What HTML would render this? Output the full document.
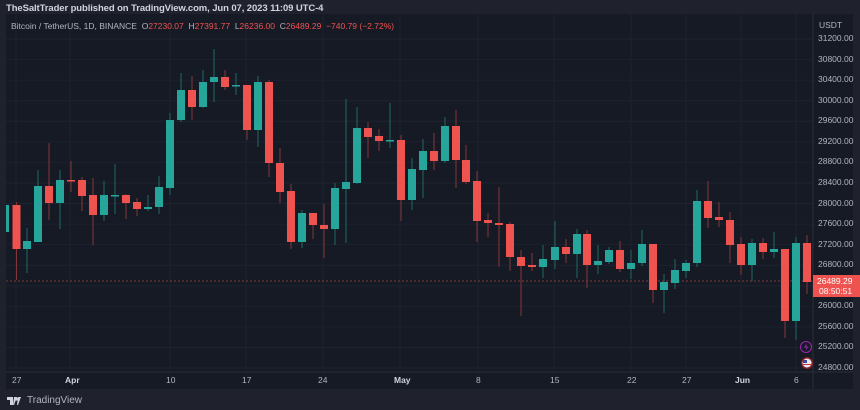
<!DOCTYPE html>
<html><head><meta charset="utf-8"><style>
*{margin:0;padding:0;box-sizing:border-box}
body{width:860px;height:410px;background:#1f222c;overflow:hidden;font-family:"Liberation Sans",sans-serif;position:relative}
.hdr{position:absolute;left:6px;top:3px;font-size:9.5px;color:#d1d4dc;font-weight:bold;letter-spacing:-0.1px}
.panel{position:absolute;left:6px;top:14px;width:847px;height:375px;background:#161a25}
.leg{position:absolute;left:11px;top:21px;font-size:8.5px;color:#b2b5be;white-space:nowrap}
.leg .r{color:#ef5350}
.ax{position:absolute;font-size:8.5px;color:#b2b5be}
.foot{position:absolute;left:7px;top:395px;font-size:10px;color:#b2b5be;display:flex;align-items:center;gap:4px}
</style></head><body>
<div class="hdr">TheSaltTrader published on TradingView.com, Jun 07, 2023 11:09 UTC-4</div>
<div class="panel"></div>
<svg id="s" width="860" height="410" style="position:absolute;left:0;top:0"></svg>
<div class="leg">Bitcoin / TetherUS, 1D, BINANCE &nbsp;O<span class="r">27230.07</span> &nbsp;H<span class="r">27391.77</span> &nbsp;L<span class="r">26236.00</span> &nbsp;C<span class="r">26489.29</span> &nbsp;<span class="r">−740.79 (−2.72%)</span></div>
<div class="ax" style="left:819px;top:20px">USDT</div>
<div id="pl"></div>
<div class="foot"><svg width="16" height="10" viewBox="0 0 16 10"><path d="M0 1h6v8H3V4H0z M7 1h3l-3 8H6z M11 1h3l-3 8h-1z" fill="#d1d4dc"/><circle cx="9.5" cy="3" r="1.6" fill="#d1d4dc"/></svg><span>TradingView</span></div>
<script>
const s=document.getElementById('s');let h='';
for(let i=0;i<=16;i++){const y=39+i*20.5625;h+=`<line x1="6" x2="813" y1="${y}" y2="${y}" stroke="#1e2230" stroke-width="1"/>`;}
const vx=[16,70,170,246,323,400,478,554,631,686,741,796];
vx.forEach(x=>h+=`<line x1="${x}" x2="${x}" y1="14" y2="372" stroke="#1e2230"/>`);
h+=`<line x1="813" x2="813" y1="14" y2="389" stroke="#2a2e39"/><line x1="6" x2="853" y1="372" y2="372" stroke="#2a2e39"/>`;
h+=`<line x1="6" x2="813" y1="281" y2="281" stroke="#ef5350" stroke-opacity="0.5" stroke-dasharray="2,2"/>`;
const C=[[8,'g',205,232,205,232],[16.5,'r',205,249,202,280],[27,'g',241,249,228,273],[38,'g',186,242,170,242],[49,'r',186,203,143,220],[60,'g',180,203,170,229],[71,'r',180,181,161,192],[82,'r',180,196,177,211],[93,'r',195,215,178,245],[104,'g',195,215,181,221],[115,'g',195,196,164,214],[126,'r',195,203,194,219],[137,'r',202,209,198,216],[148,'g',207,209,195,211],[159,'g',187,207,176,214],[170,'g',120,188,113,195],[181,'g',90,120,73,122],[192,'r',90,107,76,120],[203,'g',82,107,70,108],[214,'g',77,82,49,102],[225,'r',77,87,70,90],[236,'g',85,86,73,95],[247,'r',85,130,85,140],[258,'g',82,130,76,147],[269,'r',82,163,80,177],[280,'r',163,192,148,203],[291,'r',191,242,184,249],[302,'g',213,242,210,248],[313,'r',213,225,213,239],[324,'r',225,229,204,258],[335,'g',188,229,183,245],[346,'g',182,189,99,243],[357,'g',128,183,107,184],[368,'r',128,137,122,158],[379,'r',136,141,129,151],[390,'g',140,141,103,148],[401,'r',140,200,135,221],[412,'g',169,200,158,210],[423,'g',151,170,139,198],[434,'r',151,161,133,170],[445,'g',126,161,117,163],[456,'r',126,160,110,188],[466,'r',160,182,145,184],[477,'r',181,221,171,242],[488,'r',220,223,213,237],[499,'r',223,225,187,267],[510,'r',224,257,222,271],[521,'r',257,266,250,316],[532,'r',265,267,253,271],[543,'g',259,267,245,278],[555,'g',247,260,221,269],[566,'r',247,254,239,263],[577,'g',234,254,229,278],[587,'r',234,265,230,288],[598,'g',261,265,245,274],[609,'g',250,262,247,264],[620,'r',250,269,241,272],[631,'g',263,269,250,279],[642,'g',244,263,230,266],[653,'r',244,290,244,303],[664,'g',282,290,274,313],[675,'g',270,283,259,289],[686,'g',263,271,260,278],[697,'g',201,263,190,267],[708,'r',201,218,181,228],[719,'r',217,220,202,227],[730,'r',220,245,212,263],[741,'r',244,265,237,275],[752,'g',243,265,239,281],[763,'r',243,252,238,259],[774,'g',249,252,232,258],[785,'r',249,321,249,338],[796,'g',243,321,237,340],[807,'r',243,282,235,294]];
C.forEach(([x,c,bt,bb,wt,wb])=>{const col=c=='g'?'#26a69a':'#ef5350',wc=c=='g'?'#1f6a64':'#843538';
h+=`<line x1="${x}" x2="${x}" y1="${wt}" y2="${wb}" stroke="${wc}" stroke-width="1"/>`;
const l=x===8?6:x-4;const w=x===8?3:8;h+=`<rect x="${l}" y="${bt}" width="${w}" height="${Math.max(1.5,bb-bt)}" fill="${col}"/>`;});
h+=`<rect x="813" y="275" width="47" height="22" fill="#ef5350"/>`;
h+=`<circle cx="806" cy="347" r="5.5" fill="none" stroke="#9c27b0" stroke-width="1"/><path d="M807 343l-3 4.5h2.5l-1 3.5 3-4.5h-2.5z" fill="#9c27b0"/>`;
h+=`<circle cx="807" cy="363" r="6" fill="#8b1f2a"/><circle cx="807" cy="363" r="4.5" fill="#e8e8f0"/><rect x="803" y="360" width="4" height="3" fill="#3a4a9a"/><rect x="803" y="364" width="8" height="1" fill="#d03040"/>`;
s.innerHTML=h;
let p='';for(let i=0;i<=16;i++){const y=39+i*20.5625;const v=(31200-i*400).toFixed(2);if(i===12)continue;p+=`<div class="ax" style="left:818px;top:${y-6}px">${v}</div>`;}
const tl=[['27',12],['Apr',65],['10',166],['17',242],['24',318],['May',394],['8',476],['15',550],['22',627],['27',682],['Jun',735],['6',794]];
tl.forEach(([t,x])=>p+=`<div class="ax" style="left:${x}px;top:375px;${(t=='Apr'||t=='May'||t=='Jun')?'font-weight:bold;color:#d1d4dc':''}">${t}</div>`);
p+=`<div class="ax" style="left:817px;top:276px;color:#fff">26489.29</div><div class="ax" style="left:819px;top:286px;color:#fff">08:50:51</div>`;
document.getElementById('pl').innerHTML=p;
</script>
</body></html>
